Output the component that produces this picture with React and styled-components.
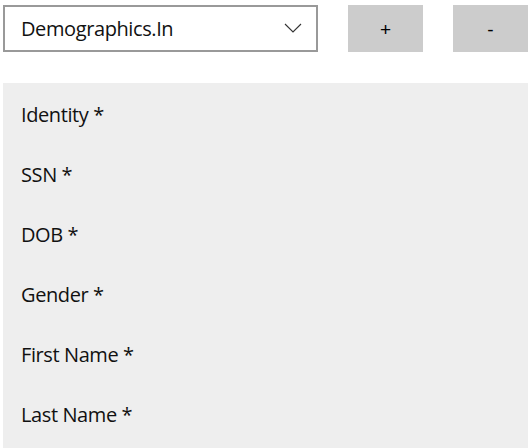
import React, { useState } from "react";
import styled, { createGlobalStyle } from "styled-components";

const GlobalStyle = createGlobalStyle`
	html, body {
		margin: 0;
		padding: 0;
		background: #ffffff;
		overflow: hidden;
	}
	body {
		font-family: "Open Sans", "Noto Sans", "Liberation Sans", sans-serif;
		color: #000000;
	}
`;

const fields = ["Identity *", "SSN *", "DOB *", "Gender *", "First Name *", "Last Name *"];

export default function App() {
	const [source] = useState("Demographics.In");
	return (
		<Page>
			<GlobalStyle />
			<Toolbar>
				<Select>
					<SelectText>{source}</SelectText>
					<Chevron width="18" height="10" viewBox="0 0 18 10">
						<path d="M1 1 L9 9 L17 1" fill="none" stroke="#333" strokeWidth="1.1" />
					</Chevron>
				</Select>
				<ActionButton>+</ActionButton>
				<ActionButton>-</ActionButton>
			</Toolbar>
			<FieldPanel>
				{fields.map((label) => (
					<FieldRow key={label}>{label}</FieldRow>
				))}
			</FieldPanel>
		</Page>
	);
}

const Page = styled.div`
	padding: 5px 2px 0 3px;
	height: 448px;
	box-sizing: border-box;
	display: flex;
	flex-direction: column;
`;

const Toolbar = styled.div`
	display: flex;
	gap: 30px;
	height: 47px;
`;

const Select = styled.div`
	width: 315px;
	box-sizing: border-box;
	border: 2px solid #999999;
	display: flex;
	align-items: center;
	justify-content: space-between;
	padding: 0 14px 0 16px;
`;

const SelectText = styled.span`
	font-size: 20px;
	font-weight: 400;
	letter-spacing: -0.4px;
	color: #111111;
`;

const Chevron = styled.svg`
	display: block;
	margin-top: -2px;
`;

const ActionButton = styled.div`
	width: 75px;
	background: #cccccc;
	display: flex;
	align-items: center;
	justify-content: center;
	font-size: 19px;
	font-family: "Liberation Sans", sans-serif;
	padding-top: 3px;
	box-sizing: border-box;
`;

const FieldPanel = styled.div`
	margin-top: 31px;
	flex: 1;
	background: #eeeeee;
	padding: 0 18px;
`;

const FieldRow = styled.div`
	height: 60px;
	display: flex;
	align-items: center;
	font-size: 20px;
	letter-spacing: -0.4px;
	color: #111111;
	padding-top: 3px;
	box-sizing: border-box;
`;
